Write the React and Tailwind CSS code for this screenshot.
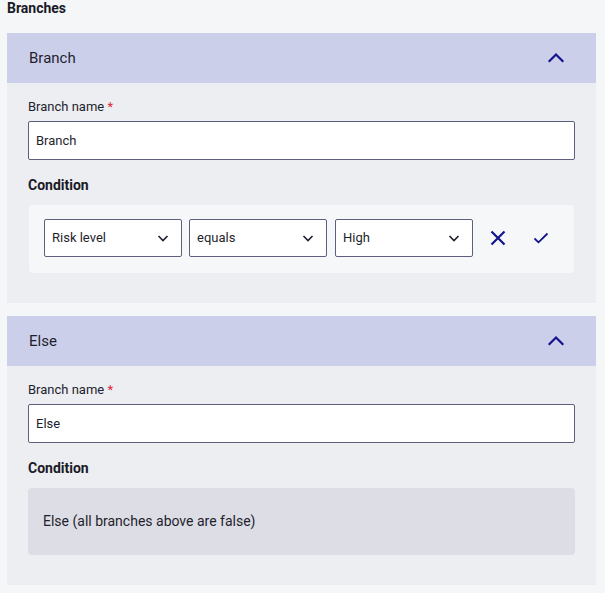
import React from "react";

const ChevronUp = () => (
  <svg width="20" height="20" viewBox="0 0 20 20" fill="none">
    <path d="M3.5 13 L10 6.5 L16.5 13" stroke="#14148c" strokeWidth="2.2" strokeLinecap="square" />
  </svg>
);

const ChevronDown = () => (
  <svg width="12" height="12" viewBox="0 0 12 12" fill="none">
    <path d="M1.5 4 L6 8.5 L10.5 4" stroke="#1f1f2e" strokeWidth="1.6" />
  </svg>
);

const XIcon = () => (
  <svg width="16" height="16" viewBox="0 0 16 16" fill="none">
    <path d="M1.5 1.5 L14.5 14.5 M14.5 1.5 L1.5 14.5" stroke="#14148c" strokeWidth="2.2" />
  </svg>
);

const CheckIcon = () => (
  <svg width="16" height="16" viewBox="0 0 16 16" fill="none">
    <path d="M1.5 8.5 L5.5 12.3 L14.5 3.5" stroke="#14148c" strokeWidth="1.8" />
  </svg>
);

function Select({ value }) {
  return (
    <div className="w-[138px] h-[38px] bg-white border border-[#5e5e7e] rounded-[2px] flex items-center justify-between pl-[7px] pr-[12px] text-[13px] text-[#1f1f2e]">
      <span>{value}</span>
      <ChevronDown />
    </div>
  );
}

function Card({ title, name, children }) {
  return (
    <div className="bg-[#edeef2]">
      <div className="h-[50px] bg-[#cccfea] flex items-center justify-between pl-[22px] pr-[30px] text-[15px] text-[#1f1f2e]">
        <span>{title}</span>
        <ChevronUp />
      </div>
      <div className="px-[21px] pt-[16px] pb-[30px]">
        <div className="text-[13px] leading-[16px] text-[#1f1f2e]">
          Branch name <span className="text-[#e0263a]">*</span>
        </div>
        <div className="mt-[6px] h-[39px] bg-white border border-[#5e5e7e] rounded-[2px] flex items-center px-[7px] text-[13px] text-[#1f1f2e]">
          {name}
        </div>
        <div className="mt-[15px] text-[14px] leading-[20px] font-bold text-[#1a1a26]">Condition</div>
        {children}
      </div>
    </div>
  );
}

export default function App() {
  return (
    <div
      className="min-h-[593px] bg-[#f5f6f8] pl-[7px] pr-[9px] pb-[10px]"
      style={{ fontFamily: "Roboto, 'Liberation Sans', sans-serif" }}
    >
      <div className="h-[33px] text-[14px] leading-[16px] font-bold text-[#1a1a26]">Branches</div>
      <div className="flex flex-col gap-[13px]">
        <Card title="Branch" name="Branch">
          <div className="mt-[10px] mx-[1px] bg-[#f6f7f9] rounded-[4px] px-[15px] pt-[14px] pb-[16px] flex items-center gap-[7px]">
            <Select value="Risk level" />
            <Select value="equals" />
            <div className="ml-[1px]">
              <Select value="High" />
            </div>
            <button className="w-[36px] h-[36px] flex items-center justify-center">
              <XIcon />
            </button>
            <button className="w-[36px] h-[36px] flex items-center justify-center">
              <CheckIcon />
            </button>
          </div>
        </Card>
        <Card title="Else" name="Else">
          <div className="mt-[10px] h-[67px] bg-[#dddde5] rounded-[4px] px-[15px] flex items-center text-[14px] text-[#1f1f2e]">
            Else (all branches above are false)
          </div>
        </Card>
      </div>
    </div>
  );
}
